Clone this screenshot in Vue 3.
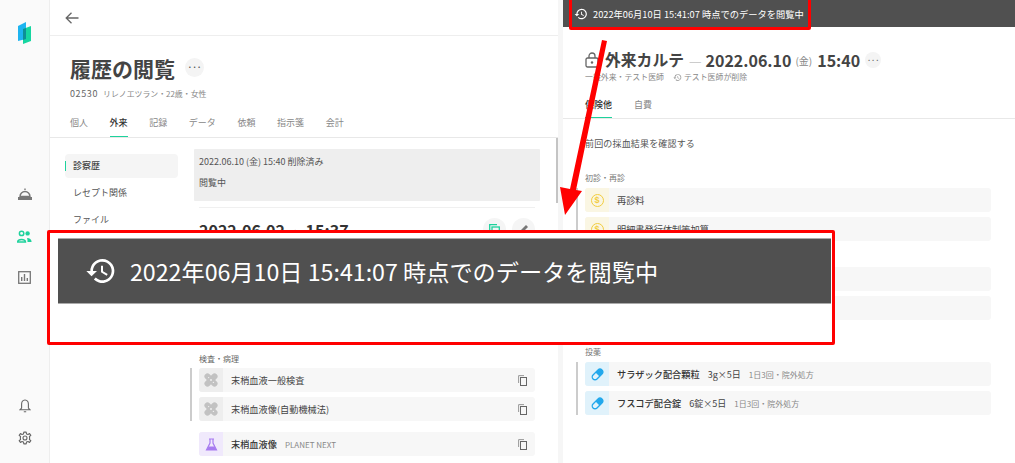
<script setup>
const tabs = ['個人', '外来', '記録', 'データ', '依頼', '指示箋', '会計']
const navItems = ['診察歴', 'レセプト関係', 'ファイル']
const exams = ['末梢血液一般検査', '末梢血液像(自動機械法)']
const drugs = [
  { name: 'サラザック配合顆粒', dose: '3g×5日', note: '1日3回・院外処方' },
  { name: 'フスコデ配合錠', dose: '6錠×5日', note: '1日3回・院外処方' },
]
const bannerText = '2022年06月10日 15:41:07 時点でのデータを閲覧中'
</script>

<template>
  <div class="page">
    <aside class="rail">
      <svg class="logo" width="14" height="22" viewBox="0 0 14 22">
        <path d="M0 4 L8 0 V17 L0 19 Z" fill="#1eb4f0" />
        <path d="M5 7 L13 4 V19 L5 22 Z" fill="#16d6a0" />
        <path d="M5 7 L8 6 V17 L5 18 Z" fill="#0d8f96" />
      </svg>
      <svg class="rail-concierge" width="16" height="14" viewBox="0 0 16 14">
        <path d="M8 1.5 V3 M3 9.5 A5 5 0 0 1 13 9.5 Z" fill="none" stroke="#777" stroke-width="1.4" />
        <rect x="1" y="10" width="14" height="3" fill="#777" />
      </svg>
      <svg class="rail-people" width="15" height="13" viewBox="0 0 15 13">
        <circle cx="4.6" cy="3.4" r="2.2" fill="none" stroke="#1ed29c" stroke-width="1.5" />
        <circle cx="10.6" cy="3.4" r="2.2" fill="#1ed29c" />
        <path d="M.7 12 C.7 8.8 8.5 8.8 8.5 12 Z" fill="none" stroke="#1ed29c" stroke-width="1.5" />
        <path d="M10 8.1 C12.5 8 14.6 9.3 14.6 12 H10.5 C10.5 10.5 10.5 9 10 8.1 Z" fill="#1ed29c" />
      </svg>
      <svg class="rail-chart" width="13" height="13" viewBox="0 0 13 13">
        <rect x=".7" y=".7" width="11.6" height="11.6" fill="none" stroke="#777" stroke-width="1.3" />
        <path d="M3.7 6 V10 M6.5 3 V10 M9.3 7 V10" stroke="#777" stroke-width="1.4" />
      </svg>
      <div class="rail-fill"></div>
      <svg class="rail-bell" width="12" height="14" viewBox="0 0 12 14">
        <path d="M6 1 C3.5 1 2.6 3 2.6 5.2 V9 L1 10.8 H11 L9.4 9 V5.2 C9.4 3 8.5 1 6 1 Z M4.8 12.7 H7.2" fill="none" stroke="#666" stroke-width="1.1" />
      </svg>
      <svg class="rail-gear" width="14" height="14" viewBox="0 0 24 24">
        <circle cx="12" cy="12" r="3.4" fill="none" stroke="#666" stroke-width="1.9" />
        <path d="M10 2 H14 L14.6 5 L17.2 6.1 L19.8 4.4 L22 7.4 L19.6 9.4 L20 12 L19.6 14.6 L22 16.6 L19.8 19.6 L17.2 17.9 L14.6 19 L14 22 H10 L9.4 19 L6.8 17.9 L4.2 19.6 L2 16.6 L4.4 14.6 L4 12 L4.4 9.4 L2 7.4 L4.2 4.4 L6.8 6.1 L9.4 5 Z" fill="none" stroke="#666" stroke-width="1.9" stroke-linejoin="round" />
      </svg>
    </aside>

    <section class="left">
      <header class="topbar">
        <svg width="14" height="12" viewBox="0 0 14 12">
          <path d="M13.5 6 H1.5 M6.5 .8 L1.2 6 L6.5 11.2" fill="none" stroke="#666" stroke-width="1.3" />
        </svg>
      </header>
      <div class="title-row">
        <h1 class="page-title">履歴の閲覧</h1>
        <span class="more more-lg">···</span>
      </div>
      <p class="patient"><b>02530</b>リレノエツラン・22歳・女性</p>
      <nav class="tabs">
        <span v-for="t in tabs" :key="t" class="tab" :class="{ active: t === '外来' }">{{ t }}</span>
      </nav>
      <div class="left-body">
        <div class="scrollbar"></div>
        <ul class="nav">
          <li v-for="(n, i) in navItems" :key="n" class="nav-item" :class="{ current: i === 0 }">{{ n }}</li>
        </ul>
        <div class="history">
          <div class="notice">
            <p>2022.06.10 (金) 15:40 削除済み</p>
            <p>閲覧中</p>
          </div>
          <div class="entry-head">
            <span class="entry-date">2022.06.02 <small>(木)</small> 15:37</span>
            <span class="round-btn">
              <svg width="11" height="11" viewBox="0 0 11 11"><path d="M.7 8 V.7 H8" fill="none" stroke="#1ed29c" stroke-width="1.3" /><rect x="3" y="3" width="7.3" height="7.3" fill="none" stroke="#1ed29c" stroke-width="1.3" /></svg>
            </span>
            <span class="round-btn">
              <svg width="11" height="11" viewBox="0 0 11 11"><path d="M1 10 L2 7 L8 1 L10 3 L4 9 Z" fill="#777" /></svg>
            </span>
          </div>
          <div class="exam-label">検査・病理</div>
          <div class="group">
            <div v-for="e in exams" :key="e" class="row">
              <span class="cell cell-grey">
                <svg width="14" height="14" viewBox="0 0 14 14">
                  <g fill="#c2c2c2" transform="rotate(45 7 7)"><rect x="4" y="-1" width="6" height="16" rx="3" /><rect x="-1" y="4" width="16" height="6" rx="3" /></g>
                  <g fill="#eee"><circle cx="7" cy="7" r="1" /><circle cx="4.6" cy="4.6" r=".7" /><circle cx="9.4" cy="9.4" r=".7" /></g>
                </svg>
              </span>
              <span class="row-name">{{ e }}</span>
              <svg class="copy" width="9" height="11" viewBox="0 0 9 11"><path d="M.6 8 V.6 H6" fill="none" stroke="#999" stroke-width="1" /><rect x="2.5" y="2.5" width="6" height="8" fill="none" stroke="#666" stroke-width="1" /></svg>
            </div>
          </div>
          <div class="row lone">
            <span class="cell cell-purple">
              <svg width="13" height="13" viewBox="0 0 13 13"><path d="M4 1 H9 M5 1 V5 L1.5 12 H11.5 L8 5 V1" fill="none" stroke="#a77bf0" stroke-width="1.2" /><path d="M3.6 8.5 H9.4 L11.5 12 H1.5 Z" fill="#a77bf0" /></svg>
            </span>
            <span class="row-name strong">末梢血液像</span>
            <span class="row-tag">PLANET NEXT</span>
            <svg class="copy" width="9" height="11" viewBox="0 0 9 11"><path d="M.6 8 V.6 H6" fill="none" stroke="#999" stroke-width="1" /><rect x="2.5" y="2.5" width="6" height="8" fill="none" stroke="#666" stroke-width="1" /></svg>
          </div>
        </div>
      </div>
    </section>

    <div class="gutter"></div>

    <section class="right">
      <div class="viewing-bar">
        <svg width="14" height="14" viewBox="0 0 24 24"><path d="M13 3a9 9 0 0 0-9 9H1l3.9 3.9L9 12H6a7 7 0 1 1 2.05 4.95L6.64 18.36A9 9 0 1 0 13 3zm-1 5v5l4.25 2.52.77-1.28-3.52-2.09V8z" fill="#fff" /></svg>
        <span>{{ bannerText }}</span>
      </div>
      <div class="karte-title">
        <svg width="14" height="16" viewBox="0 0 14 16"><rect x="1" y="6" width="12" height="9" rx="1.5" fill="none" stroke="#666" stroke-width="1.3" /><path d="M4 6 V4 a3 3 0 0 1 6 0 V6" fill="none" stroke="#666" stroke-width="1.3" /><circle cx="7" cy="10.5" r="1.2" fill="#666" /></svg>
        <h2 class="karte-name">外来カルテ</h2>
        <span class="dash">—</span>
        <span class="karte-date">2022.06.10</span>
        <span class="karte-dow">(金)</span>
        <span class="karte-date">15:40</span>
        <span class="more more-sm">···</span>
      </div>
      <div class="karte-sub">
        <span>一般外来・テスト医師</span>
        <svg width="9" height="9" viewBox="0 0 24 24"><path d="M13 3a9 9 0 0 0-9 9H1l3.9 3.9L9 12H6a7 7 0 1 1 2.05 4.95L6.64 18.36A9 9 0 1 0 13 3zm-1 5v5l4.25 2.52.77-1.28-3.52-2.09V8z" fill="#999" /></svg>
        <span>テスト医師が削除</span>
      </div>
      <nav class="tabs tabs-right">
        <span class="tab active">保険他</span>
        <span class="tab">自費</span>
      </nav>
      <div class="right-body">
        <p class="memo">前回の採血結果を確認する</p>
        <div class="label">初診・再診</div>
        <div class="group group-right">
          <div class="row">
            <span class="cell cell-yellow"><span class="coin">$</span></span>
            <span class="row-name">再診料</span>
          </div>
          <div class="row">
            <span class="cell cell-yellow"><span class="coin">$</span></span>
            <span class="row-name">明細書発行体制等加算</span>
          </div>
        </div>
        <div class="group group-right group-covered">
          <div class="row"></div>
          <div class="row"></div>
        </div>
        <div class="label drug-label">投薬</div>
        <div class="group group-right">
          <div v-for="d in drugs" :key="d.name" class="row">
            <span class="cell cell-blue">
              <svg width="13" height="13" viewBox="0 0 13 13"><g transform="rotate(-45 6.5 6.5)"><rect x=".2" y="3.7" width="12.6" height="5.6" rx="2.8" fill="none" stroke="#22a8ec" stroke-width="1.3" /><path d="M6.5 3.7 H10 A2.8 2.8 0 0 1 10 9.3 H6.5 Z" fill="#22a8ec" /></g></svg>
            </span>
            <span class="row-name strong">{{ d.name }}</span>
            <span class="row-dose">{{ d.dose }}</span>
            <span class="row-note">{{ d.note }}</span>
          </div>
        </div>
      </div>
    </section>

    <div class="mark-small"></div>
    <svg class="arrow" width="60" height="190" viewBox="0 0 60 190">
      <path d="M42 0 L47 1 L16 150 L22 151 L5 175 L0 147 L10 149 Z" fill="#ff0000" />
    </svg>
    <div class="callout">
      <div class="callout-bar">
        <svg width="32" height="32" viewBox="0 0 24 24"><path d="M13 3a9 9 0 0 0-9 9H1l3.9 3.9L9 12H6a7 7 0 1 1 2.05 4.95L6.64 18.36A9 9 0 1 0 13 3zm-1 5v5l4.25 2.52.77-1.28-3.52-2.09V8z" fill="#fff" /></svg>
        <span>{{ bannerText }}</span>
      </div>
    </div>
  </div>
</template>

<style scoped>
* { box-sizing: border-box; }
p, h1, h2, ul { margin: 0; padding: 0; }
.page {
  position: relative;
  width: 1015px;
  height: 463px;
  overflow: hidden;
  display: flex;
  background: #fff;
  color: #444;
  font-family: "Noto Sans CJK JP", "Noto Sans", sans-serif;
  font-size: 9px;
}
.rail {
  width: 50px;
  flex: none;
  background: #fafafa;
  border-right: 1px solid #eee;
  display: flex;
  flex-direction: column;
  align-items: center;
  padding: 22px 0 18px;
}
.logo { margin-left: 1px; }
.rail-concierge { margin-top: 143px; }
.rail-people { margin-top: 29px; }
.rail-chart { margin-top: 28px; }
.rail-fill { flex: 1; }
.rail-bell { margin-bottom: 18px; }
.left {
  width: 508px;
  flex: none;
  display: flex;
  flex-direction: column;
}
.topbar {
  height: 36px;
  flex: none;
  border-bottom: 1px solid #eee;
  padding: 12px 0 0 15px;
  display: flex;
  align-items: flex-start;
}
.title-row {
  display: flex;
  align-items: center;
  padding: 18px 0 0 20px;
  height: 46px;
  gap: 10px;
}
.page-title {
  font-size: 21px;
  line-height: 28px;
  font-weight: 700;
  color: #444;
}
.more {
  display: flex;
  align-items: center;
  justify-content: center;
  border-radius: 50%;
  background: #f4f4f4;
  color: #555;
  font-weight: 700;
  line-height: 1;
}
.more-lg { width: 19px; height: 19px; font-size: 8px; margin-top: -2px; }
.more-sm { width: 16px; height: 16px; font-size: 7px; margin-left: 5px; }
.patient {
  padding: 6px 0 0 20px;
  font-size: 7.9px;
  line-height: 12px;
  color: #888;
}
.patient b {
  font-weight: 400;
  color: #666;
  font-size: 9px;
  letter-spacing: .6px;
  margin-right: 5px;
}
.tabs {
  display: flex;
  gap: 21.6px;
  height: 36px;
  flex: none;
  padding-left: 20px;
  border-bottom: 1px solid #e8e8e8;
  margin-top: 2px;
}
.tab {
  position: relative;
  font-size: 9px;
  line-height: 13px;
  padding-top: 14px;
  color: #888;
}
.tab.active { color: #333; font-weight: 500; }
.tab.active::after {
  content: "";
  position: absolute;
  left: 0;
  right: 0;
  bottom: 0;
  height: 1px;
  background: #1ed29c;
}
.left-body {
  position: relative;
  flex: 1;
  display: flex;
  padding: 11px 0 0 15px;
}
.scrollbar {
  position: absolute;
  right: 0;
  top: 0;
  width: 2px;
  height: 65px;
  background: #c4c4c4;
}
.nav {
  list-style: none;
  width: 113px;
  flex: none;
  padding-top: 5px;
}
.nav-item {
  height: 24px;
  line-height: 24px;
  padding-left: 8px;
  margin-bottom: 3px;
  font-size: 9px;
  color: #555;
  position: relative;
}
.nav-item.current {
  background: #f5f5f5;
  border-radius: 4px;
  font-weight: 500;
  color: #444;
}
.nav-item.current::before {
  content: "";
  position: absolute;
  left: 0;
  top: 7px;
  width: 1px;
  height: 10px;
  background: #1ed29c;
}
.history {
  margin-left: 16px;
  width: 346px;
  flex: none;
}
.notice {
  height: 52px;
  background: #eee;
  padding: 6px 5px;
  font-size: 9px;
  line-height: 13px;
  color: #555;
  border-radius: 1px;
}
.notice p + p { margin-top: 8px; }
.entry-head {
  margin: 6px 5px 0;
  border-top: 1px solid #f0f0f0;
  height: 146px;
  display: flex;
  align-items: flex-start;
  gap: 6px;
  padding-top: 10px;
}
.entry-date {
  flex: 1;
  font-size: 16px;
  line-height: 24px;
  font-weight: 700;
  color: #333;
}
.entry-date small { font-size: 8px; font-weight: 400; color: #888; }
.round-btn {
  width: 23px;
  height: 23px;
  border-radius: 50%;
  background: #f5f5f5;
  display: flex;
  align-items: center;
  justify-content: center;
}
.exam-label {
  margin: 0 0 4px 5px;
  font-size: 8px;
  line-height: 11px;
  color: #666;
}
.group {
  position: relative;
  display: flex;
  flex-direction: column;
  gap: 5px;
  margin: 0 5px;
}
.group::before {
  content: "";
  position: absolute;
  left: -9px;
  top: 0;
  bottom: 0;
  width: 2px;
  background: #ccc;
}
.row {
  height: 24px;
  background: #f7f7f7;
  border-radius: 3px;
  display: flex;
  align-items: center;
  overflow: hidden;
}
.lone { margin: 11px 5px 0; }
.cell {
  width: 24px;
  height: 100%;
  flex: none;
  display: flex;
  align-items: center;
  justify-content: center;
}
.cell-grey { background: #eeeeee; }
.cell-purple { background: #f0e9fc; }
.cell-yellow { background: #faf6e3; }
.cell-blue { background: #e0f2fb; }
.row-name {
  margin-left: 8px;
  font-size: 9.2px;
  color: #444;
}
.row-name.strong { font-weight: 500; color: #333; }
.row-tag {
  margin-left: 8px;
  font-size: 8px;
  color: #888;
  flex: 1;
}
.copy { margin: 0 8px 0 auto; }
.gutter {
  width: 5px;
  flex: none;
  background: #f6f6f6;
}
.right {
  flex: 1;
  display: flex;
  flex-direction: column;
  min-width: 0;
}
.viewing-bar {
  height: 27px;
  flex: none;
  background: #505050;
  color: #fff;
  display: flex;
  align-items: center;
  gap: 5px;
  padding-left: 11px;
  font-size: 9.25px;
}
.karte-title {
  display: flex;
  align-items: center;
  padding: 22px 0 0 22px;
  height: 44px;
  flex: none;
}
.karte-name {
  margin-left: 6px;
  font-size: 15.8px;
  line-height: 22px;
  font-weight: 700;
  color: #444;
}
.dash { margin: 0 4px 0 5px; color: #ccc; font-size: 14px; }
.karte-date { font-size: 16px; font-weight: 700; color: #444; line-height: 22px; }
.karte-dow { margin: 0 5px 0 4px; font-size: 10px; color: #888; }
.karte-sub {
  display: flex;
  align-items: center;
  gap: 2px;
  padding-left: 22px;
  font-size: 7.9px;
  line-height: 12px;
  color: #888;
}
.karte-sub svg { margin-left: 7px; }
.tabs-right {
  padding-left: 22px;
  height: 36px;
  margin-top: 0;
  gap: 22px;
}
.tabs-right .tab { padding-top: 15px; }
.right-body { padding: 18px 24px 0 22px; }
.memo { font-size: 9px; line-height: 14px; color: #555; letter-spacing: .17px; }
.label {
  margin-top: 21px;
  font-size: 8px;
  line-height: 11px;
  color: #777;
  margin-bottom: 5px;
}
.group-covered { margin-top: 26px; }
.drug-label { margin-top: 26px; }
.group-right { margin-left: 0; margin-right: 0; }
.coin {
  width: 13px;
  height: 13px;
  border: 1.5px solid #f2cd3f;
  border-radius: 50%;
  color: #f2cd3f;
  font-size: 9px;
  font-weight: 700;
  line-height: 10px;
  text-align: center;
  font-family: "Liberation Sans", sans-serif;
}
.row-dose { margin-left: 8px; font-size: 9px; color: #444; }
.row-note { margin-left: 8px; font-size: 8px; color: #888; }
.mark-small {
  position: absolute;
  left: 569px;
  top: -3px;
  width: 242px;
  height: 33px;
  border: 3px solid #f00;
  border-radius: 2px;
}
.arrow {
  position: absolute;
  left: 560px;
  top: 40px;
}
.callout {
  position: absolute;
  left: 47px;
  top: 230px;
  width: 788px;
  height: 115px;
  border: 3px solid #f00;
  border-radius: 2px;
  background: #fff;
  padding: 5px 1px 0 8px;
}
.callout-bar {
  height: 66px;
  background: #505050;
  border-top: 1px solid #aaa;
  border-bottom: 1px solid #aaa;
  color: #fff;
  display: flex;
  align-items: center;
  gap: 13px;
  padding-left: 27px;
  font-size: 23.2px;
}
</style>
